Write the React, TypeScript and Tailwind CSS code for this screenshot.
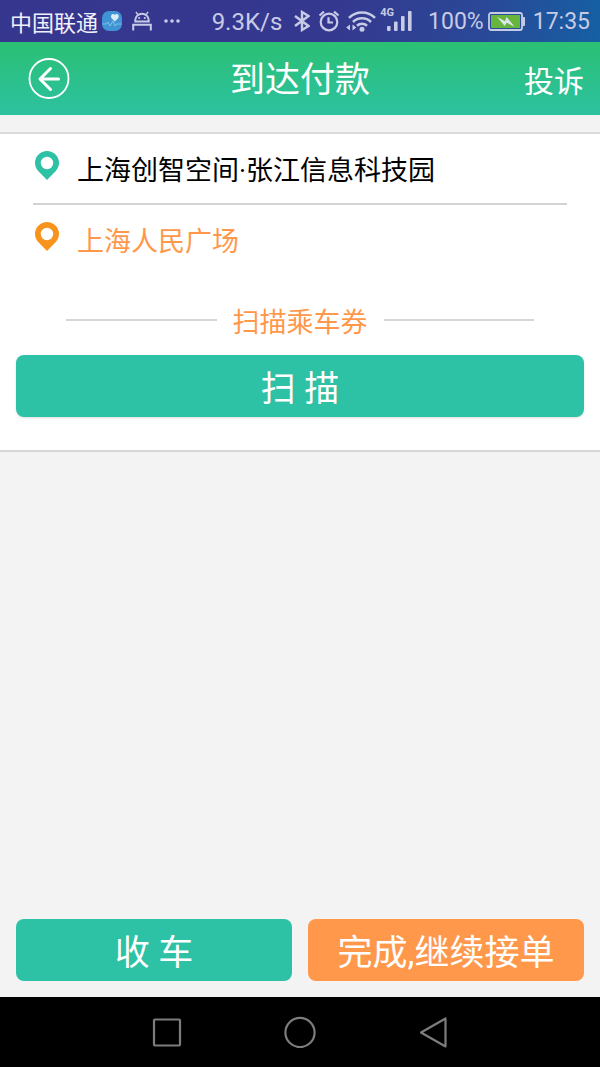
import type { ReactElement } from "react";

function StatusBar(): ReactElement {
  return (
    <div className="flex h-[42px] items-center justify-between bg-[linear-gradient(100deg,#36368e_0%,#35388f_55%,#2a4897_80%,#1560a3_100%)] px-2.5 text-[23px] text-[#c8cbe6]">
      <div className="flex items-center">
        <span className="pt-1 text-[22px] text-[#f0f0fa]">中国联通</span>
        <svg className="ml-1 h-5 w-5" viewBox="0 0 20 20" fill="none" aria-hidden="true">
          <rect width="20" height="20" rx="7" fill="#4094d4" />
          <path d="M0.5 13h4l1.5-2 2 4 3-5 2 5 1.5-2h5" stroke="#8ecbee" strokeWidth="0.8" />
          <path d="M12.8 10.5 9.6 7.2C7.6 4.6 11 1.6 12.8 4c2-2.4 5.4.6 3.3 3.2z" fill="#d8ebf7" />
        </svg>
        <svg className="ml-2.5 h-5 w-5" viewBox="0 0 20 20" fill="none" stroke="currentColor" strokeWidth="2" aria-hidden="true">
          <path d="M3.3 10.5V9a6.7 6.2 0 0 1 13.4 0v1.5z" />
          <path d="M5.8 3.6 4 .8M14.2 3.6 16 .8" strokeWidth="1.5" />
          <path d="M1.2 19.5v-5.8h17.6v5.8" />
          <circle cx="7.2" cy="7" r="1.1" fill="currentColor" stroke="none" />
          <circle cx="12.8" cy="7" r="1.1" fill="currentColor" stroke="none" />
        </svg>
        <svg className="ml-3 h-1 w-4" viewBox="0 0 16 4" fill="currentColor" aria-hidden="true">
          <circle cx="2" cy="2" r="1.8" />
          <circle cx="8" cy="2" r="1.8" />
          <circle cx="14" cy="2" r="1.8" />
        </svg>
      </div>

      <div className="flex items-center">
        <span className="pt-0.5 text-2xl">9.3K/s</span>
        <svg className="ml-3 h-[22px] w-4" viewBox="0 0 16 22" fill="none" stroke="currentColor" strokeWidth="2.4" aria-hidden="true">
          <path d="m1 6 13.500 10-6.500 4V2l6.500 4L1 16" />
        </svg>
        <svg className="ml-2 h-[22px] w-[22px]" viewBox="0 0 22 22" fill="none" stroke="currentColor" strokeWidth="2.2" aria-hidden="true">
          <circle cx="11" cy="12" r="8.3" />
          <path d="M10.5 7.2v5.3H15" />
          <path d="M1.5 5.5 6 1.7M20.5 5.5 16 1.7" />
        </svg>
        <svg className="ml-1.5 h-[22px] w-[30px]" viewBox="0 0 30 22" fill="none" stroke="currentColor" strokeWidth="2.6" aria-hidden="true">
          <path d="M3 7.8a18.5 18.5 0 0 1 26 0M7 12a12.8 12.8 0 0 1 18 0M11 15.8a7.2 7.2 0 0 1 10 0" />
          <circle cx="16" cy="19.3" r="2.5" fill="currentColor" stroke="none" />
          <path d="M4 14.5v6L.2 17.5zM6.5 14.5v6l3.8-3z" fill="currentColor" stroke="none" />
        </svg>
        <div className="ml-1 flex items-end pb-1">
          <span className="self-start text-[11px] font-bold leading-3">4G</span>
          <svg className="-ml-2 h-6 w-[26px]" viewBox="0 0 26 24" fill="currentColor" aria-hidden="true">
            <rect x="1" y="19" width="3.6" height="5" rx="1" />
            <rect x="8" y="14.5" width="3.6" height="9.5" rx="1" />
            <rect x="15" y="9" width="3.6" height="15" rx="1" />
            <rect x="22" y="4" width="3.6" height="20" rx="1" />
          </svg>
        </div>
        <span className="ml-4 pt-0.5">100%</span>
        <svg className="ml-1 h-[19px] w-[37px]" viewBox="0 0 37 19" fill="none" aria-hidden="true">
          <rect x="1" y="1" width="33" height="17" rx="2" stroke="#c8cbe6" strokeWidth="1.8" />
          <rect x="3" y="3" width="29" height="13" fill="#67b53c" />
          <path d="M34.5 5H36a1 1 0 0 1 1 1v7a1 1 0 0 1-1 1h-1.5z" fill="#c8cbe6" />
          <path d="m9 4.800 8 4.500 1.500-4.300 8 9.500-8-3.800-1.800 3.300z" fill="#dfe5f0" />
        </svg>
        <span className="ml-2 pt-0.5">17:35</span>
      </div>
    </div>
  );
}

function Pin({ className }: { className: string }): ReactElement {
  return (
    <svg className={`mb-2.5 h-[29px] w-6 shrink-0 ${className}`} viewBox="0 0 24 29" fill="currentColor" aria-hidden="true">
      <path fillRule="evenodd" d="M12 0a12 12 0 0 1 12 12c0 3.200-1.200 5.600-3.200 8L12 29 3.200 20C1.200 17.600 0 15.200 0 12A12 12 0 0 1 12 0zm0 5.800a6.200 6.200 0 1 0 0 12.400 6.200 6.200 0 0 0 0-12.400z" />
    </svg>
  );
}

function AndroidNav(): ReactElement {
  return (
    <nav className="flex h-[70px] items-center justify-center gap-[101px] bg-black text-[#7d7d7d]">
      <button type="button" aria-label="Recent apps">
        <svg className="h-8 w-8" viewBox="0 0 32 32" fill="none" stroke="currentColor" strokeWidth="2.2">
          <rect x="3" y="3.5" width="26" height="26" rx="1" />
        </svg>
      </button>
      <button type="button" aria-label="Home">
        <svg className="h-8 w-8" viewBox="0 0 32 32" fill="none" stroke="currentColor" strokeWidth="2.2">
          <circle cx="16" cy="16.5" r="14.6" />
        </svg>
      </button>
      <button type="button" aria-label="Back">
        <svg className="h-8 w-8" viewBox="0 0 32 32" fill="none" stroke="currentColor" strokeWidth="2.2" strokeLinejoin="round">
          <path d="M28.500 2.500v28L4 16.500z" />
        </svg>
      </button>
    </nav>
  );
}

export default function App(): ReactElement {
  return (
    <div className="flex min-h-screen flex-col bg-[#f3f3f3] font-[Roboto,'Noto_Sans_CJK_SC',sans-serif]">
      <StatusBar />

      <header className="grid h-[73px] grid-cols-[1fr_auto_1fr] items-center bg-linear-to-b from-[#2bc073] to-[#2dc1a0] px-4 text-white">
        <button type="button" aria-label="返回" className="ml-3 justify-self-start">
          <svg className="h-[42px] w-[42px]" viewBox="0 0 42 42" fill="none" stroke="currentColor">
            <circle cx="21" cy="20.5" r="19.5" strokeWidth="1.8" />
            <path d="M30.500 21H12.500M22.500 10.500 12 21l10.500 10.500" strokeWidth="3" strokeLinecap="round" strokeLinejoin="round" />
          </svg>
        </button>
        <h1 className="pt-1 text-[35px] leading-none">到达付款</h1>
        <button type="button" className="justify-self-end pt-1.5 text-3xl leading-none">
          投诉
        </button>
      </header>

      <main className="flex flex-1 flex-col">
        <section className="mt-[17px] border-t-2 border-b-2 border-t-[#dadada] border-b-[#d6d6d6] bg-white px-4 pb-[33px]">
          <div className="mx-[17px] flex h-[71px] items-center gap-[18px] border-b-2 border-[#d3d3d3] px-0.5 pt-1 text-[27px] text-black">
            <Pin className="text-[#2dc1a6]" />
            <span className="pt-0.5">上海创智空间·张江信息科技园</span>
          </div>
          <div className="mx-[17px] flex h-[69px] items-center gap-[18px] px-0.5 pt-1 text-[27px] text-[#ff984b]">
            <Pin className="text-[#f7941d]" />
            <span className="pt-0.5">上海人民广场</span>
          </div>

          <div className="mx-[50px] mt-[26px] flex items-center gap-4 text-[27px] text-[#ff984b]">
            <span className="h-0.5 flex-1 bg-[#d6d6d6]" />
            <h2 className="pt-1.5 leading-[34px]">扫描乘车券</h2>
            <span className="h-0.5 flex-1 bg-[#d6d6d6]" />
          </div>
          <button type="button" className="mt-[15px] h-[62px] w-full rounded-lg bg-[#2dc1a6] pt-1.5 text-[35px] leading-none text-white shadow-sm">
            扫 描
          </button>
        </section>

        <div className="mt-auto grid grid-cols-2 gap-4 px-4 pb-4">
          <button type="button" className="h-[62px] rounded-lg bg-[#2dc1a6] pt-1.5 text-[35px] leading-none text-white">
            收 车
          </button>
          <button type="button" className="h-[62px] rounded-lg bg-[#ff984b] pt-1.5 text-[35px] leading-none text-white">
            完成,继续接单
          </button>
        </div>
      </main>

      <AndroidNav />
    </div>
  );
}
